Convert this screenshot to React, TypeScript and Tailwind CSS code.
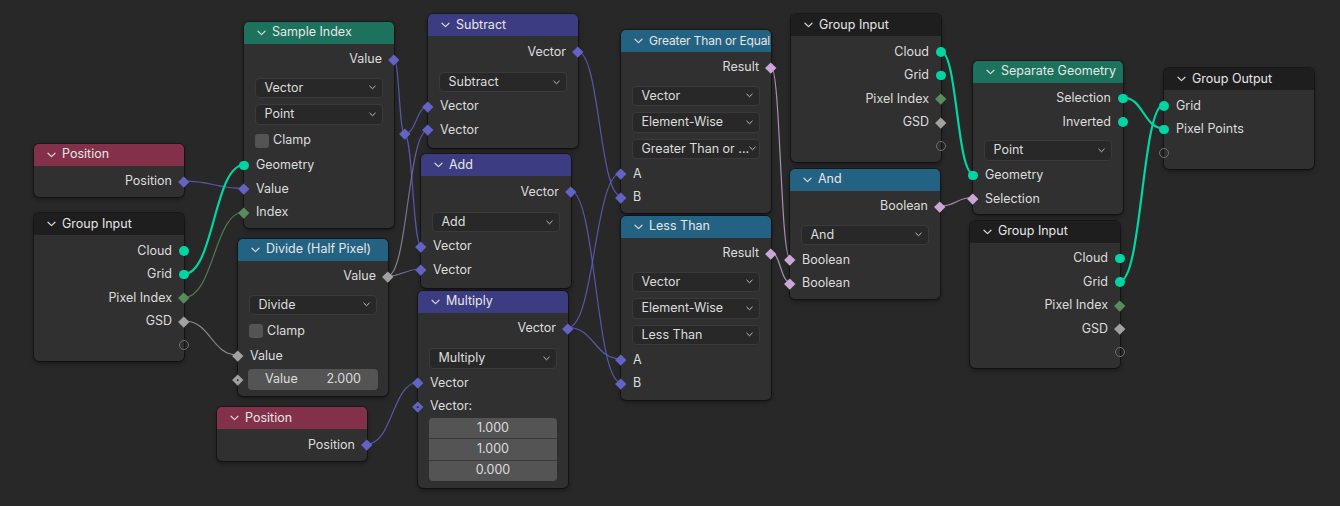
import React from 'react';

type Sock = 'geo' | 'vec' | 'float' | 'int' | 'bool' | 'empty';

type Row =
  | { k: 'out'; label: string; t: Sock }
  | { k: 'in'; label: string; t: Sock; dot?: boolean }
  | { k: 'menu'; label: string; h?: string }
  | { k: 'check'; label: string }
  | { k: 'field'; label: string; value: string; t: Sock }
  | { k: 'vec3'; values: string[] }
  | { k: 'gap'; h: string };

interface NodeDef {
  id: string;
  title: string;
  titleCls?: string;
  pos: string;
  head: string;
  pb: string;
  rows: Row[];
}

const sockColor: Record<Sock, string> = {
  geo: 'bg-[#00d6a3]',
  vec: 'bg-[#6363c7]',
  float: 'bg-[#a1a1a1]',
  int: 'bg-[#598c5c]',
  bool: 'bg-[#cca6d6]',
  empty: '',
};

const hexColor: Record<Sock, string> = {
  geo: '#00d6a3',
  vec: '#6363c7',
  float: '#a1a1a1',
  int: '#598c5c',
  bool: '#cca6d6',
  empty: '#777777',
};

const groupInputRows: Row[] = [
  { k: 'out', label: 'Cloud', t: 'geo' },
  { k: 'out', label: 'Grid', t: 'geo' },
  { k: 'out', label: 'Pixel Index', t: 'int' },
  { k: 'out', label: 'GSD', t: 'float' },
  { k: 'out', label: '', t: 'empty' },
];

const nodes: NodeDef[] = [
  {
    id: 'pos1', title: 'Position', pos: 'left-[34px] top-[143.5px]', head: 'bg-[#83314a]', pb: 'pb-[4px]',
    rows: [{ k: 'out', label: 'Position', t: 'vec' }],
  },
  {
    id: 'gi1', title: 'Group Input', pos: 'left-[34px] top-[213px]', head: 'bg-[#1e1e1e]', pb: 'pb-[4.5px]',
    rows: groupInputRows,
  },
  {
    id: 'sample', title: 'Sample Index', pos: 'left-[244px] top-[21.5px]', head: 'bg-[#1d725e]', pb: 'pb-[4px]',
    rows: [
      { k: 'out', label: 'Value', t: 'vec' },
      { k: 'gap', h: 'h-[3.5px]' },
      { k: 'menu', label: 'Vector' },
      { k: 'menu', label: 'Point' },
      { k: 'check', label: 'Clamp' },
      { k: 'in', label: 'Geometry', t: 'geo' },
      { k: 'in', label: 'Value', t: 'vec' },
      { k: 'in', label: 'Index', t: 'int' },
    ],
  },
  {
    id: 'sub', title: 'Subtract', pos: 'left-[428px] top-[14px]', head: 'bg-[#3c3c83]', pb: 'pb-[6px]',
    rows: [
      { k: 'out', label: 'Vector', t: 'vec' },
      { k: 'gap', h: 'h-[6px]' },
      { k: 'menu', label: 'Subtract', h: 'h-[25px]' },
      { k: 'in', label: 'Vector', t: 'vec' },
      { k: 'in', label: 'Vector', t: 'vec' },
    ],
  },
  {
    id: 'add', title: 'Add', pos: 'left-[421px] top-[154px]', head: 'bg-[#3c3c83]', pb: 'pb-[6px]',
    rows: [
      { k: 'out', label: 'Vector', t: 'vec' },
      { k: 'gap', h: 'h-[6px]' },
      { k: 'menu', label: 'Add', h: 'h-[25px]' },
      { k: 'in', label: 'Vector', t: 'vec' },
      { k: 'in', label: 'Vector', t: 'vec' },
    ],
  },
  {
    id: 'div', title: 'Divide (Half Pixel)', pos: 'left-[238px] top-[238.5px]', head: 'bg-[#246283]', pb: 'pb-[5px]',
    rows: [
      { k: 'out', label: 'Value', t: 'float' },
      { k: 'gap', h: 'h-[3.5px]' },
      { k: 'menu', label: 'Divide' },
      { k: 'check', label: 'Clamp' },
      { k: 'in', label: 'Value', t: 'float' },
      { k: 'field', label: 'Value', value: '2.000', t: 'float' },
    ],
  },
  {
    id: 'pos2', title: 'Position', pos: 'left-[217px] top-[407px]', head: 'bg-[#83314a]', pb: 'pb-[4px]',
    rows: [{ k: 'out', label: 'Position', t: 'vec' }],
  },
  {
    id: 'mul', title: 'Multiply', pos: 'left-[418px] top-[290.5px]', head: 'bg-[#3c3c83]', pb: 'pb-[7px]',
    rows: [
      { k: 'out', label: 'Vector', t: 'vec' },
      { k: 'gap', h: 'h-[6px]' },
      { k: 'menu', label: 'Multiply', h: 'h-[25px]' },
      { k: 'in', label: 'Vector', t: 'vec' },
      { k: 'in', label: 'Vector:', t: 'vec', dot: true },
      { k: 'vec3', values: ['1.000', '1.000', '0.000'] },
    ],
  },
  {
    id: 'gte', title: 'Greater Than or Equal', titleCls: 'text-[12px] tracking-[-0.15px]', pos: 'left-[621px] top-[29.5px]', head: 'bg-[#246283]', pb: 'pb-[4px]',
    rows: [
      { k: 'out', label: 'Result', t: 'bool' },
      { k: 'gap', h: 'h-[3.5px]' },
      { k: 'menu', label: 'Vector' },
      { k: 'menu', label: 'Element-Wise' },
      { k: 'menu', label: 'Greater Than or ...' },
      { k: 'in', label: 'A', t: 'vec' },
      { k: 'in', label: 'B', t: 'vec' },
    ],
  },
  {
    id: 'lt', title: 'Less Than', pos: 'left-[621px] top-[215.5px]', head: 'bg-[#246283]', pb: 'pb-[5px]',
    rows: [
      { k: 'out', label: 'Result', t: 'bool' },
      { k: 'gap', h: 'h-[3.5px]' },
      { k: 'menu', label: 'Vector' },
      { k: 'menu', label: 'Element-Wise' },
      { k: 'menu', label: 'Less Than' },
      { k: 'in', label: 'A', t: 'vec' },
      { k: 'in', label: 'B', t: 'vec' },
    ],
  },
  {
    id: 'gi2', title: 'Group Input', pos: 'left-[791px] top-[14px]', head: 'bg-[#1e1e1e]', pb: 'pb-[4px]',
    rows: groupInputRows,
  },
  {
    id: 'and', title: 'And', pos: 'left-[790px] top-[168.5px]', head: 'bg-[#246283]', pb: 'pb-[4px]',
    rows: [
      { k: 'out', label: 'Boolean', t: 'bool' },
      { k: 'gap', h: 'h-[3.5px]' },
      { k: 'menu', label: 'And' },
      { k: 'in', label: 'Boolean', t: 'bool' },
      { k: 'in', label: 'Boolean', t: 'bool' },
    ],
  },
  {
    id: 'sep', title: 'Separate Geometry', pos: 'left-[973px] top-[60.5px]', head: 'bg-[#1d725e]', pb: 'pb-[3px]',
    rows: [
      { k: 'out', label: 'Selection', t: 'geo' },
      { k: 'out', label: 'Inverted', t: 'geo' },
      { k: 'gap', h: 'h-[3.5px]' },
      { k: 'menu', label: 'Point' },
      { k: 'in', label: 'Geometry', t: 'geo' },
      { k: 'in', label: 'Selection', t: 'bool' },
    ],
  },
  {
    id: 'gi3', title: 'Group Input', pos: 'left-[970px] top-[220.5px]', head: 'bg-[#1e1e1e]', pb: 'pb-[4px]',
    rows: groupInputRows,
  },
  {
    id: 'gout', title: 'Group Output', pos: 'left-[1164px] top-[68px]', head: 'bg-[#1e1e1e]', pb: 'pb-[4px]',
    rows: [
      { k: 'in', label: 'Grid', t: 'geo' },
      { k: 'in', label: 'Pixel Points', t: 'geo' },
      { k: 'in', label: '', t: 'empty' },
    ],
  },
];

// [x1, y1, from, x2, y2, to]
const links: [number, number, Sock, number, number, Sock][] = [
  [184, 181, 'vec', 244, 188.5, 'vec'],
  [184, 274, 'geo', 244, 165, 'geo'],
  [184, 297.5, 'int', 244, 212, 'int'],
  [184, 321, 'float', 238, 355, 'float'],
  [394, 59, 'vec', 404.5, 134, 'vec'],
  [404.5, 134, 'vec', 428, 106.5, 'vec'],
  [404.5, 134, 'vec', 421, 245.5, 'vec'],
  [387.5, 276, 'float', 428, 130, 'vec'],
  [387.5, 276, 'float', 421, 269, 'vec'],
  [367, 444, 'vec', 418, 382.5, 'vec'],
  [578, 52, 'vec', 621, 196, 'vec'],
  [568, 327.5, 'vec', 621, 173, 'vec'],
  [568, 327.5, 'vec', 621, 359, 'vec'],
  [570.5, 191, 'vec', 621, 382.5, 'vec'],
  [771, 66.5, 'bool', 790, 258.5, 'bool'],
  [771, 252.5, 'bool', 790, 282, 'bool'],
  [941, 51.5, 'geo', 973, 173.5, 'geo'],
  [940, 206, 'bool', 973, 197.5, 'bool'],
  [1123, 97.5, 'geo', 1164, 128.5, 'geo'],
  [1120, 281, 'geo', 1164, 104.5, 'geo'],
];

function Chevron({ className }: { className?: string }) {
  return (
    <svg width="9" height="6" viewBox="0 0 9 6" className={className}>
      <path d="M1 1.2 L4.5 4.6 L8 1.2" fill="none" stroke="currentColor" strokeWidth="1.2" strokeLinecap="round" strokeLinejoin="round" />
    </svg>
  );
}

function Socket({ t, side, dot }: { t: Sock; side: 'l' | 'r'; dot?: boolean }) {
  const place = side === 'l' ? 'left-[-6px]' : 'right-[-6px]';
  return (
    <span className={`absolute ${place} top-1/2 -mt-[6px] w-[12px] h-[12px] flex items-center justify-center`}>
      {t === 'empty' ? (
        <span className="w-[10px] h-[10px] rounded-full border-[1.5px] border-[#707070]" />
      ) : t === 'geo' ? (
        <span className={`w-[9.5px] h-[9.5px] rounded-full ${sockColor[t]}`} />
      ) : (
        <span className={`w-[7.5px] h-[7.5px] rotate-45 flex items-center justify-center ${sockColor[t]}`}>
          {dot && <span className="w-[2.5px] h-[2.5px] rounded-full bg-[#2a2a2a]" />}
        </span>
      )}
    </span>
  );
}

function NodeRow({ row }: { row: Row }) {
  switch (row.k) {
    case 'gap':
      return <div className={row.h} />;
    case 'out':
      return (
        <div className="relative h-[23.5px] flex items-center justify-end pr-[12px]">
          <span>{row.label}</span>
          <Socket t={row.t} side="r" />
        </div>
      );
    case 'in':
      return (
        <div className="relative h-[23.5px] flex items-center pl-[12px]">
          <span>{row.label}</span>
          <Socket t={row.t} side="l" dot={row.dot} />
        </div>
      );
    case 'menu':
      return (
        <div className={`${row.h ?? 'h-[26.5px]'} flex items-center px-[11px]`}>
          <div className="w-full h-[20.5px] flex items-center justify-between pl-[8.5px] pr-[6px] rounded-[4px] bg-[#282828] border border-[#3a3a3a] overflow-hidden whitespace-nowrap">
            <span>{row.label}</span>
            <Chevron className="w-[7px] h-[5px] text-[#cfcfcf] shrink-0" />
          </div>
        </div>
      );
    case 'check':
      return (
        <div className="h-[26px] flex items-center gap-[4px] px-[11px]">
          <span className="w-[14px] h-[14px] rounded-[3px] bg-[#545454]" />
          <span>{row.label}</span>
        </div>
      );
    case 'field':
      return (
        <div className="relative h-[23.5px] flex items-center px-[10px]">
          <div className="w-full h-[21px] flex items-center justify-between px-[17px] rounded-[4px] bg-[#545454]">
            <span>{row.label}</span>
            <span>{row.value}</span>
          </div>
          <Socket t={row.t} side="l" dot />
        </div>
      );
    case 'vec3':
      return (
        <div className="px-[11px]">
          <div className="rounded-[4px] overflow-hidden flex flex-col gap-[1px] bg-[#3a3a3a]">
            {row.values.map((v, i) => (
              <div key={i} className="h-[20.3px] flex items-center justify-center bg-[#545454]">
                {v}
              </div>
            ))}
          </div>
        </div>
      );
  }
}

function Node({ node }: { node: NodeDef }) {
  return (
    <div className={`absolute ${node.pos} w-[150px] rounded-[5px] bg-[#303030] shadow-[0_0_0_1px_rgba(0,0,0,0.35),0_2px_5px_rgba(0,0,0,0.45)]`}>
      <div className={`h-[22px] flex items-center pl-[13px] rounded-t-[5px] overflow-hidden whitespace-nowrap text-[#e6e6e6] ${node.head}`}>
        <Chevron className="shrink-0 text-[#d6d6d6]" />
        <span className={`ml-[6px] ${node.titleCls ?? ''}`}>{node.title}</span>
      </div>
      <div className={`pt-[4px] ${node.pb}`}>
        {node.rows.map((r, i) => (
          <NodeRow key={i} row={r} />
        ))}
      </div>
    </div>
  );
}

function Links() {
  return (
    <svg className="absolute inset-0" width="1340" height="506" viewBox="0 0 1340 506">
      <defs>
        {links.map(([x1, y1, a, x2, y2, b], i) =>
          a !== b ? (
            <linearGradient key={i} id={`lg${i}`} gradientUnits="userSpaceOnUse" x1={x1} y1={y1} x2={x2} y2={y2}>
              <stop offset="0" stopColor={hexColor[a]} />
              <stop offset="1" stopColor={hexColor[b]} />
            </linearGradient>
          ) : null
        )}
      </defs>
      {links.map(([x1, y1, a, x2, y2, b], i) => {
        const h = Math.abs(x2 - x1) * 0.5;
        const d = `M${x1} ${y1} C${x1 + h} ${y1} ${x2 - h} ${y2} ${x2} ${y2}`;
        const stroke = a === b ? hexColor[a] : `url(#lg${i})`;
        const thick = a === 'geo';
        return (
          <path
            key={i}
            d={d}
            fill="none"
            stroke={stroke}
            strokeWidth={thick ? 2.2 : 1.2}
            strokeOpacity={thick ? 1 : 0.8}
          />
        );
      })}
    </svg>
  );
}

export default function App() {
  return (
    <div className="relative w-[1340px] h-[506px] overflow-hidden bg-[#282828] text-[#dddddd] text-[12.5px] leading-none font-['Inter',sans-serif]">
      <Links />
      {nodes.map(n => (
        <Node key={n.id} node={n} />
      ))}
      {/* reroute */}
      <span className="absolute left-[399px] top-[128.5px] w-[11px] h-[11px] flex items-center justify-center">
        <span className="w-[7.5px] h-[7.5px] rotate-45 bg-[#6363c7]" />
      </span>
    </div>
  );
}
